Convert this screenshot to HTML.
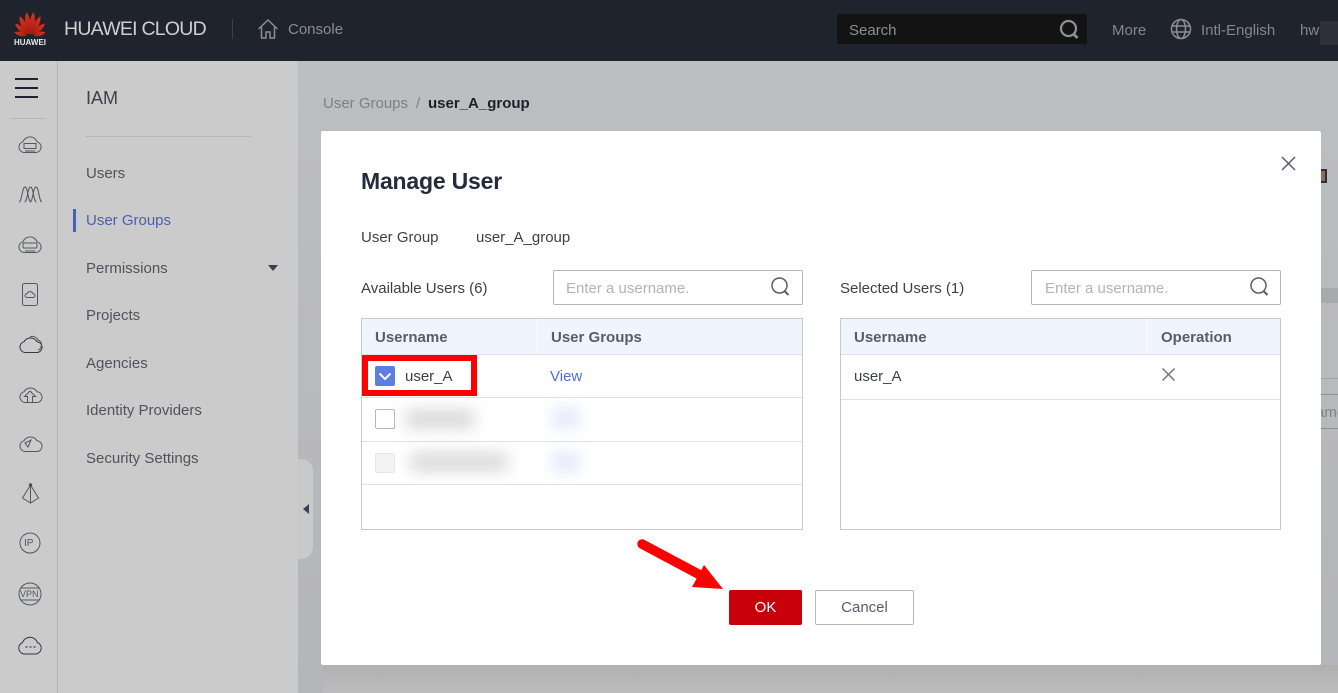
<!DOCTYPE html>
<html><head><meta charset="utf-8"><style>
html,body{margin:0;padding:0}
body{width:1338px;height:693px;overflow:hidden;position:relative;background:#bcbdc0;font:15px/20px "Liberation Sans",sans-serif;color:#50535b}
.a{position:absolute}
.t{position:absolute;white-space:nowrap;line-height:20px}
.b{font-weight:700}
.line{position:absolute;height:1px;background:#dfe1e6}
</style></head><body>
<div class="a" style="left:298px;top:61px;width:1040px;height:632px;background:linear-gradient(180deg,#bdbec1,#b4b5b9)"></div>
<div class="a" style="left:323px;top:665px;width:1015px;height:28px;background:linear-gradient(180deg,#b0b0b0,#bcbcbc)"></div>
<div class="a" style="left:1321px;top:288px;width:17px;height:15px;background:#a9aaae"></div>
<div class="a" style="left:1321px;top:378px;width:17px;height:1px;background:#a3a4a8"></div>
<div class="a" style="left:1321px;top:394px;width:17px;height:1px;background:#8f9094"></div>
<div class="a" style="left:1321px;top:428px;width:17px;height:1px;background:#8f9094"></div>
<div class="a" style="left:1321px;top:403px;width:17px;height:20px;overflow:hidden"><div class="t" style="left:-5px;top:0;color:#808186">ame</div></div>
<div class="a" style="left:1321px;top:169px;width:6px;height:14px;border:2px solid #2a3040;border-left:0;box-sizing:border-box;background:#8f6e55"></div>

<!-- header -->
<div class="a" style="left:0;top:0;width:1338px;height:61px;background:#1f232d"></div>
<svg class="a" style="left:12px;top:10px" width="36" height="28" viewBox="0 0 36 28">
<defs><linearGradient id="g" x1="0" y1="0" x2="0" y2="1"><stop offset="0" stop-color="#e0331e"/><stop offset="1" stop-color="#a01a10"/></linearGradient></defs>
<g fill="url(#g)" transform="translate(18 0) scale(.88 1) translate(-18 0)">
<g transform="translate(18 26) rotate(-9)"><path d="M0-1C-4-8-4.500-19 0-24 3.500-18 3-8 0-1z"/></g>
<g transform="translate(18 26) rotate(9)"><path d="M0-1C-3-8-3.500-18 0-24 4.500-19 4-8 0-1z"/></g>
<g transform="translate(18 26) rotate(-31)"><path d="M0-2C-4-8-4.500-17 0-23 3.500-17 3-8 0-2z"/></g>
<g transform="translate(18 26) rotate(31)"><path d="M0-2C-3-8-3.500-17 0-23 4.500-17 4-8 0-2z"/></g>
<g transform="translate(18 26) rotate(-54)"><path d="M0-3C-3.500-8-4-15 0-21 3-15 3-8 0-3z"/></g>
<g transform="translate(18 26) rotate(54)"><path d="M0-3C-3-8-3-15 0-21 4-15 3.500-8 0-3z"/></g>
<g transform="translate(18 26) rotate(-78)"><path d="M0-3C-3-8-3-13 0-18 2.500-13 2.500-8 0-3z"/></g>
<g transform="translate(18 26) rotate(78)"><path d="M0-3C-2.500-8-2.500-13 0-18 3-13 3-8 0-3z"/></g>
</g></svg>
<div class="t b" style="left:14px;top:33px;font-size:8px;color:#e8e8e8;letter-spacing:0">HUAWEI</div>
<div class="t" style="left:64px;top:19px;font-size:19.500px;color:#cfcfcf;letter-spacing:-.75px">HUAWEI CLOUD</div>
<div class="a" style="left:232px;top:19px;width:1px;height:20px;background:#3c404a"></div>
<svg class="a" style="left:257px;top:18px" width="22" height="22" viewBox="0 0 22 22" fill="none" stroke="#8b8e95" stroke-width="1.500"><path d="M1.500 11L11 2l9.500 9M4.500 9v11h4.500v-6h4v6h4.500V9"/></svg>
<div class="t" style="left:288px;top:20px;color:#8a8d94">Console</div>
<div class="a" style="left:837px;top:14px;width:250px;height:30px;background:#131313;border-radius:2px"></div>
<div class="t" style="left:849px;top:21px;color:#8a8f99">Search</div>
<svg class="a" style="left:1059px;top:19px" width="21" height="21" viewBox="0 0 21 21" fill="none" stroke="#8b8f96" stroke-width="2.300"><circle cx="9.500" cy="9.500" r="7.500"/><path d="M14.500 15l4 4" stroke-width="2.800"/></svg>
<div class="t" style="left:1112px;top:21px;color:#83868e">More</div>
<svg class="a" style="left:1170px;top:18px" width="22" height="22" viewBox="0 0 22 22" fill="none" stroke="#8b8e95" stroke-width="1.500"><circle cx="11" cy="11" r="9.500"/><ellipse cx="11" cy="11" rx="4.500" ry="9.500"/><path d="M1.500 8h19M1.500 14h19"/></svg>
<div class="t" style="left:1201px;top:21px;color:#83868e">Intl-English</div>
<div class="t" style="left:1300px;top:21px;color:#83868e">hw</div>
<div class="a" style="left:1320px;top:21px;width:18px;height:24px;background:#2e313a"></div>

<!-- left rail -->
<div class="a" style="left:0;top:61px;width:57px;height:632px;background:#cbcbcb;border-right:1px solid #b4b4b6"></div>
<div class="a" style="left:58px;top:61px;width:240px;height:632px;background:#cbcbcb"></div>
<div class="a" style="left:15px;top:78px;width:23px;height:2px;background:#1f2330"></div>
<div class="a" style="left:15px;top:87px;width:23px;height:2px;background:#1f2330"></div>
<div class="a" style="left:15px;top:96px;width:23px;height:2px;background:#1f2330"></div>
<div class="a" style="left:11px;top:118px;width:34px;height:1px;background:#b5b5b8"></div>
<svg class="a" style="left:0;top:120px" width="57" height="550" viewBox="0 120 57 550" fill="none" stroke="#54575f" stroke-width="1">
<path d="M24 152.500a5.500 5.500 0 0 1-1-10.800 7.500 7.500 0 0 1 14 0 5.500 5.500 0 0 1-1 10.800z"/><rect x="24" y="143.500" width="12" height="5"/><path d="M25 151h10"/>
<path d="M19 202c3 0 3-15 6-15s3 15 6 15M24.500 202c3 0 3-15 6-15s3 15 6 15M30 202c3 0 3-15 6-15s3 15 6 15"/>
<path d="M24 252.500a5.500 5.500 0 0 1-1-10.800 7.500 7.500 0 0 1 14 0 5.500 5.500 0 0 1-1 10.800z"/><rect x="23" y="243" width="14" height="5" rx="1"/><path d="M25 251h10"/>
<rect x="22.500" y="283.500" width="15" height="22" rx="2"/><path d="M27 297.500a2 2 0 0 1 .2-4 3 3 0 0 1 5.600 0 2 2 0 0 1 .2 4z"/>
<path d="M25 352.500a5.500 5.500 0 0 1-1-10.800 7.500 7.500 0 0 1 13 0 5.500 5.500 0 0 1 1 10.800z" stroke="#33363f"/><path d="M30 337a6 6 0 0 1 8 3 5 5 0 0 1 3 7 4 4 0 0 1-3 3"/>
<path d="M25 402.500a5.500 5.500 0 0 1-1-10.800 7.500 7.500 0 0 1 13 0 5.500 5.500 0 0 1 1 10.800z"/><path d="M30 391l-5.500 5.500h3v6h5v-6h3z"/>
<path d="M25 451.500a5.500 5.500 0 0 1-1-10.800 7.500 7.500 0 0 1 13 0 5.500 5.500 0 0 1 1 10.800z"/><path d="M28 447l3-7-6 3z"/>
<path d="M30.500 485l-8 13 8 5 8-5zM30.500 485v18"/><circle cx="30.500" cy="485" r="1.200" fill="#33363f"/>
<circle cx="30" cy="543" r="10"/><path d="M22 549a10 10 0 0 0 16 0"/>
<circle cx="30" cy="594" r="11"/><path d="M21 588h18M21 600h18"/>
<path d="M24 654a6 6 0 0 1-1.500-11.500 8 8 0 0 1 15 0A6 6 0 0 1 36 654z" stroke="#33363f"/>
<path d="M25.500 647h2M29.500 647h2M33.500 647h2" stroke-width="1.500"/>
</svg>
<div class="t" style="left:24px;top:534px;font-size:10px;color:#54575f">IP</div>
<div class="t" style="left:20px;top:584px;font-size:9px;color:#54575f">VPN</div>

<!-- side menu -->
<div class="t" style="left:86px;top:88px;font-size:18px;color:#3d4049">IAM</div>
<div class="a" style="left:86px;top:136px;width:165px;height:1px;background:#b5b5ba"></div>
<div class="t" style="left:86px;top:164px">Users</div>
<div class="a" style="left:73px;top:209px;width:3px;height:23px;background:#4a62b5"></div>
<div class="t" style="left:86px;top:211px;color:#4a5fb0">User Groups</div>
<div class="t" style="left:86px;top:259px">Permissions</div>
<div class="a" style="left:268px;top:265px;width:0;height:0;border:5px solid transparent;border-top:6px solid #3b3f4f;border-bottom:0"></div>
<div class="t" style="left:86px;top:306px">Projects</div>
<div class="t" style="left:86px;top:354px">Agencies</div>
<div class="t" style="left:86px;top:401px">Identity Providers</div>
<div class="t" style="left:86px;top:449px">Security Settings</div>
<div class="a" style="left:298px;top:459px;width:15px;height:100px;background:#c9c9c9;border-radius:0 12px 12px 0"></div>
<div class="a" style="left:303px;top:504px;width:0;height:0;border:5.500px solid transparent;border-right:6px solid #3b3f4f;border-left:0"></div>

<!-- breadcrumb -->
<div class="t" style="left:323px;top:94px;color:#7d7f85">User Groups</div>
<div class="t" style="left:416px;top:94px;color:#7d7f85">/</div>
<div class="t b" style="left:428px;top:94px;color:#1d2029">user_A_group</div>

<!-- modal -->
<div class="a" style="left:321px;top:131px;width:1000px;height:534px;background:#fff;border-radius:2px"></div>
<div class="t b" style="left:361px;top:171px;color:#252b3a;font-size:23px;letter-spacing:-.2px">Manage User</div>
<svg class="a" style="left:1281px;top:156px" width="15" height="15" viewBox="0 0 15 15" stroke="#5a5e6a" stroke-width="1.500"><path d="M1 1l13 13M14 1L1 14"/></svg>
<div class="t" style="left:361px;top:228px;color:#3d4049">User Group</div>
<div class="t" style="left:476px;top:228px;color:#3d4049">user_A_group</div>

<div class="t" style="left:361px;top:279px;color:#3d4049">Available Users (6)</div>
<div class="a" style="left:553px;top:270px;width:250px;height:35px;box-sizing:border-box;border:1px solid #b4b6bd;border-radius:2px"></div>
<div class="t" style="left:566px;top:279px;color:#b1b3ba">Enter a username.</div>
<svg class="a" style="left:770px;top:276px" width="21" height="21" viewBox="0 0 21 21" fill="none" stroke="#5a5e6a" stroke-width="1.500"><circle cx="9.500" cy="9.500" r="7.500"/><path d="M14.500 15l4 4" stroke-width="2"/></svg>

<div class="t" style="left:840px;top:279px;color:#3d4049">Selected Users (1)</div>
<div class="a" style="left:1031px;top:270px;width:250px;height:35px;box-sizing:border-box;border:1px solid #b4b6bd;border-radius:2px"></div>
<div class="t" style="left:1045px;top:279px;color:#b1b3ba">Enter a username.</div>
<svg class="a" style="left:1249px;top:276px" width="21" height="21" viewBox="0 0 21 21" fill="none" stroke="#5a5e6a" stroke-width="1.500"><circle cx="9.500" cy="9.500" r="7.500"/><path d="M14.500 15l4 4" stroke-width="2"/></svg>

<!-- left table -->
<div class="a" style="left:361px;top:318px;width:442px;height:212px;box-sizing:border-box;border:1px solid #c8c9cc"></div>
<div class="a" style="left:362px;top:319px;width:440px;height:35px;background:#f0f4fd"></div>
<div class="a" style="left:537px;top:319px;width:1px;height:35px;background:#fff"></div>
<div class="line" style="left:362px;top:354px;width:440px"></div>
<div class="line" style="left:362px;top:397px;width:440px"></div>
<div class="line" style="left:362px;top:441px;width:440px"></div>
<div class="line" style="left:362px;top:484px;width:440px"></div>
<div class="t b" style="left:375px;top:328px;color:#575d6c">Username</div>
<div class="t b" style="left:551px;top:328px;color:#575d6c">User Groups</div>
<div class="a" style="left:375px;top:366px;width:20px;height:20px;background:#5c7ee0;border-radius:2px"></div>
<svg class="a" style="left:375px;top:366px" width="20" height="20" viewBox="0 0 20 20" fill="none" stroke="#fff" stroke-width="2"><path d="M4.500 7.500l5.500 5.500 5.500-5.500"/></svg>
<div class="t" style="left:405px;top:367px;color:#3d4049">user_A</div>
<div class="t" style="left:550px;top:367px;color:#526ecc">View</div>
<div class="a" style="left:362px;top:355px;width:115px;height:41px;box-sizing:border-box;border:6px solid #f00"></div>
<div class="a" style="left:375px;top:409px;width:20px;height:20px;box-sizing:border-box;border:1px solid #b4b6bd;border-radius:2px;background:#fff"></div>
<div class="a" style="left:375px;top:453px;width:20px;height:20px;box-sizing:border-box;border:1px solid #e4e5e8;border-radius:2px;background:#f3f3f5"></div>
<div class="a" style="left:406px;top:410px;width:68px;height:18px;background:#d6d6d6;filter:blur(8px)"></div>
<div class="a" style="left:410px;top:453px;width:98px;height:18px;background:#d8d8d8;filter:blur(8px)"></div>
<div class="a" style="left:553px;top:409px;width:26px;height:18px;background:#e0e5f8;filter:blur(8px)"></div>
<div class="a" style="left:553px;top:453px;width:26px;height:18px;background:#e0e5f8;filter:blur(8px)"></div>

<!-- right table -->
<div class="a" style="left:840px;top:318px;width:441px;height:212px;box-sizing:border-box;border:1px solid #c8c9cc"></div>
<div class="a" style="left:841px;top:319px;width:439px;height:35px;background:#f0f4fd"></div>
<div class="a" style="left:1147px;top:319px;width:1px;height:35px;background:#fff"></div>
<div class="line" style="left:841px;top:354px;width:439px"></div>
<div class="line" style="left:841px;top:399px;width:439px"></div>
<div class="t b" style="left:854px;top:328px;color:#575d6c">Username</div>
<div class="t b" style="left:1161px;top:328px;color:#575d6c">Operation</div>
<div class="t" style="left:854px;top:367px;color:#3d4049">user_A</div>
<svg class="a" style="left:1162px;top:368px" width="13" height="13" viewBox="0 0 13 13" stroke="#75777d" stroke-width="1.500"><path d="M.5.500l12 12M12.500.500l-12 12"/></svg>

<!-- buttons -->
<div class="a" style="left:729px;top:590px;width:73px;height:35px;background:#c7000b;border-radius:2px;color:#fff;text-align:center;line-height:35px">OK</div>
<div class="a" style="left:815px;top:590px;width:99px;height:35px;box-sizing:border-box;border:1px solid #b4b6bd;border-radius:2px;color:#575d6c;text-align:center;line-height:34px">Cancel</div>

<!-- arrow -->
<svg class="a" style="left:630px;top:535px" width="100" height="60" viewBox="630 535 100 60"><path d="M642 544L702 576" stroke="#f00" stroke-width="9.500" stroke-linecap="round"/><path d="M704 565L692 587L723 589z" fill="#f00"/></svg>
</body></html>
